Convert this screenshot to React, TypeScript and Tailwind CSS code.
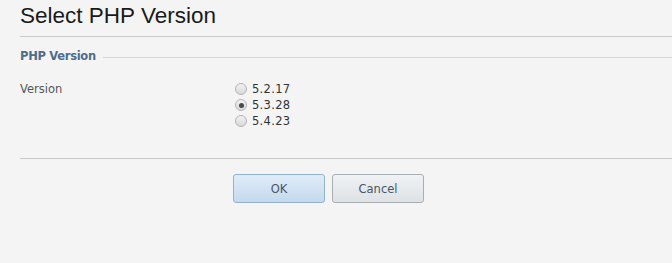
import React from "react";

function Radio({ checked }: { checked?: boolean }) {
  return (
    <span className="flex h-[12px] w-[12px] items-center justify-center rounded-full border border-[#b4b4b4] bg-gradient-to-b from-[#f2f2f2] to-[#d9d9d9]">
      {checked ? <span className="h-[5px] w-[5px] rounded-full bg-[#4a4a4a]" /> : null}
    </span>
  );
}

export default function App() {
  const versions = [
    { v: "5.2.17", c: false },
    { v: "5.3.28", c: true },
    { v: "5.4.23", c: false },
  ];
  return (
    <div className="h-[263px] w-full overflow-hidden bg-[#f4f4f4] font-['DejaVu_Sans',sans-serif]">
      <div className="ml-5 border-b border-[#c9c9c9] pb-[7px] pt-[3px]">
        <h1 className="font-['Liberation_Sans',Arial,sans-serif] text-[22.5px] leading-[26px] text-[#1a1a1a]">
          Select PHP Version
        </h1>
      </div>

      <div className="ml-5 mt-[12px] flex items-start">
        <span className="text-[11.5px] font-bold leading-[14px] tracking-[-0.3px] text-[#4d6d8c]">PHP Version</span>
        <span className="ml-[7px] mt-[8px] h-px flex-1 bg-[#d6d6d6]" />
      </div>

      <div className="ml-5 mt-[18px] flex">
        <div className="w-[215px] text-[11.5px] leading-[16px] text-[#555]">Version</div>
        <div className="flex flex-col">
          {versions.map((r) => (
            <label key={r.v} className="flex h-[16px] items-center gap-[5px]">
              <Radio checked={r.c} />
              <span className="text-[11.5px] leading-[16px] tracking-[0.3px] text-[#333]">{r.v}</span>
            </label>
          ))}
        </div>
      </div>

      <div className="ml-5 mt-[29px] border-t border-[#c9c9c9]" />

      <div className="ml-[233px] mt-[15px] flex gap-[7px]">
        <button className="h-[29px] w-[92px] rounded-[3px] border border-[#92b2d2] bg-gradient-to-b from-[#e0ecf8] to-[#c4d9ee] pt-[2px] text-[11.5px] text-[#4a5561]">
          OK
        </button>
        <button className="h-[29px] w-[92px] rounded-[3px] border border-[#a9aeb3] bg-gradient-to-b from-[#f0f2f4] to-[#dde2e6] pt-[2px] text-[11.5px] text-[#4a5561]">
          Cancel
        </button>
      </div>
    </div>
  );
}
